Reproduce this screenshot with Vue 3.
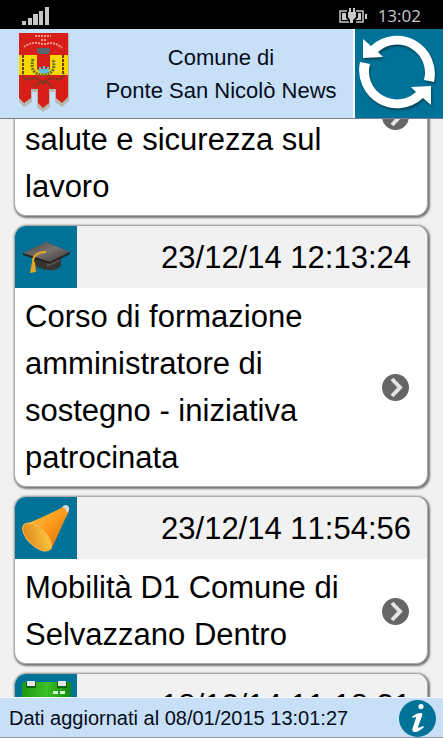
<template>
  <div class="app">
    <div class="status-bar">
      <svg class="signal" viewBox="0 0 28 18" aria-hidden="true">
        <rect x="0" y="14" width="4" height="4" />
        <rect x="6" y="11" width="4" height="7" />
        <rect x="11" y="7" width="5" height="11" />
        <rect x="17" y="4" width="4" height="14" />
        <rect x="23" y="0" width="4" height="18" />
      </svg>
      <svg class="battery" viewBox="0 0 30 18" aria-hidden="true">
        <path class="case" d="M9 4H2V15H11M18 15H25V4H18" />
        <path d="M4 6H8V11L10 13H4ZM23 6H20V11L17 13H23Z" />
        <path d="M10 5H11V1H13V5H15V1H17V5H18V10L15 13V16H12V13L10 10ZM27 7H29V12H27Z" />
      </svg>
      <span class="clock">13:02</span>
    </div>

    <header class="header">
      <svg class="crest" viewBox="0 0 52 80" aria-hidden="true">
        <path class="fringe" d="M1 1H51V69L44 75L37 70V60H32V75L25 80L19 75V60H14V70L6 75L1 70Z" />
        <path fill="#d81e18" d="M1 1H50V65L44 71L38 66V57H31V71L25 76L20 71V57H13V66L6 71L1 66Z" />
        <path fill="#f7d800" d="M1 23H50V43H1Z" />
        <path fill="#d81e18" d="M19 20H32V37Q25 44 19 37Z" />
        <path fill="#58666c" d="M19 16H32V20L30 22H21L19 20Z" />
        <path fill="#58c5df" d="M21 38V35H23V37H25V34H27V37H29V35H31V40Q26 44 21 40Z" />
        <path class="laurel" d="M15 27Q11 42 25 43Q39 42 35 27" />
        <path class="vine" d="M5 23V40Q4 47 10 48M45 23V40Q47 47 39 48M10 47Q19 44 25 52Q32 44 40 47M16 55Q25 44 34 55" />
        <path class="banner" d="M17 4H33M23 8H28M6 15Q12 10 20 11Q26 13 32 11Q39 11 44 16" />
      </svg>
      <h1 class="title">Comune di<br>Ponte San Nicolò News</h1>
      <button class="refresh" type="button" aria-label="Aggiorna">
        <svg viewBox="0 0 88 89" aria-hidden="true">
          <path :d="arrow" />
          <path :d="arrow" transform="rotate(180 42 43)" />
        </svg>
      </button>
    </header>

    <main ref="list" class="list">
      <a v-for="item in news" :key="item.date" class="card" href="#">
        <div class="card-head">
          <div class="card-icon">
            <svg v-if="item.icon === 'cap'" viewBox="0 0 62 62" aria-hidden="true">
              <defs>
                <linearGradient id="board" x1="0" y1="0" x2="1" y2="1">
                  <stop offset="0" stop-color="#444" />
                  <stop offset="0.5" stop-color="#77716e" />
                  <stop offset="1" stop-color="#333" />
                </linearGradient>
              </defs>
              <path fill="#343434" d="M19 30L46 28V40Q42 45 33 44Q24 43 19 39Z" />
              <path fill="#62504c" d="M32 37L45 32V35L32 41Z" />
              <path fill="url(#board)" d="M8 27L31 16L55 26L35 36Z" />
              <path fill="#222" d="M8 27L35 36L55 26V28L35 38L8 29Z" />
              <path class="cord" d="M31 26Q20 26 18 34V39" />
              <path fill="#e4a620" d="M17 36H20L21 46L15 47Z" />
            </svg>
            <svg v-else-if="item.icon === 'horn'" viewBox="0 0 62 62" aria-hidden="true">
              <defs>
                <linearGradient id="horn" x1="0" y1="0" x2="1" y2="1">
                  <stop offset="0" stop-color="#ffd25a" />
                  <stop offset="0.5" stop-color="#ff9c1c" />
                  <stop offset="1" stop-color="#d96500" />
                </linearGradient>
                <linearGradient id="mouth" x1="0" y1="0" x2="1" y2="1">
                  <stop offset="0" stop-color="#d97d12" />
                  <stop offset="1" stop-color="#ffd24b" />
                </linearGradient>
              </defs>
              <path fill="url(#horn)" d="M8 28Q25 22 48 10Q52 7 54 12Q54 15 51 20L36 53Z" />
              <path fill="#d8d9de" d="M47 10Q51 6 54 10Q55 13 52 16Q51 11 47 10Z" />
              <ellipse class="mouth" cx="22" cy="40" rx="9" ry="18" transform="rotate(-46 22 40)" />
            </svg>
            <svg v-else viewBox="0 0 62 62" aria-hidden="true">
              <defs>
                <linearGradient id="page" x1="0" y1="0" x2="1" y2="0">
                  <stop offset="0" stop-color="#1c9a10" />
                  <stop offset="0.5" stop-color="#3cc024" />
                  <stop offset="1" stop-color="#128a10" />
                </linearGradient>
              </defs>
              <rect x="7" y="8" width="49" height="48" rx="2" fill="url(#page)" />
              <path fill="#fff" d="M8 23H55V54H8Z" />
              <path fill="#d8f5d2" d="M38 17H43V20H38ZM45 17H50V20H45Z" />
              <path fill="#0d6414" d="M11 8H21V14H11ZM42 8H52V14H42Z" />
              <path fill="#e6e6e6" d="M12 7H20V12H12ZM43 7H51V12H43Z" />
            </svg>
          </div>
          <time class="date">{{ item.date }}</time>
        </div>
        <div class="card-body">
          <p class="text">{{ item.text }}</p>
          <svg class="chevron" viewBox="0 0 27 27" aria-hidden="true">
            <circle cx="13.5" cy="13.5" r="13.5" />
            <path d="M10 5L18 13.5L10 22" />
          </svg>
        </div>
      </a>
    </main>

    <footer class="footer">
      <span>Dati aggiornati al 08/01/2015 13:01:27</span>
      <button class="info" type="button" aria-label="Informazioni">
        <svg viewBox="0 0 37 37" aria-hidden="true">
          <circle cx="22" cy="6.500" r="2.600" />
          <path d="M13 17Q17 13 22 13Q24 13 23 16L19 27Q19 29 24 26L25 27Q20 32 16 32Q12 32 14 27L17 18Q17 16 14 18Z" />
        </svg>
      </button>
    </footer>
  </div>
</template>

<script setup>
import { ref, onMounted } from 'vue'

const arrow = 'M8 10L16 17A38 38 0 0 1 79 53L69 51A28 28 0 0 0 23 23L28 28L8 29Z'

const news = [
  { icon: 'cap', date: '23/12/14 12:20:10', text: 'Corso di formazione amministratori per la salute e sicurezza sul lavoro' },
  { icon: 'cap', date: '23/12/14 12:13:24', text: 'Corso di formazione amministratore di sostegno - iniziativa patrocinata' },
  { icon: 'horn', date: '23/12/14 11:54:56', text: 'Mobilità D1 Comune di Selvazzano Dentro' },
  { icon: 'calendar', date: '18/12/14 11:18:31', text: 'Eventi di Natale' },
]

const list = ref(null)

// keep the second item just below the end of the first one
onMounted(() => {
  const second = list.value.children[1]
  list.value.scrollTop = second.offsetTop - list.value.offsetTop - 106
})
</script>

<style>
body { margin: 0; background: #f1f1f1; }
</style>

<style scoped>
.app {
  height: 100vh;
  display: flex; flex-direction: column;
  background: #f1f1f1; color: #000;
  font-family: "Liberation Sans", Arial, sans-serif;
  font-kerning: none;
}

.status-bar {
  flex: none; height: 29px; box-sizing: border-box;
  display: flex; align-items: center;
  padding: 2px 22px 0;
  background: #000; color: #c8c8c8;
}
.signal { width: 28px; height: 18px; fill: #c8c8c8; }
.battery { width: 30px; height: 18px; margin-left: auto; fill: #c8c8c8; }
.case { fill: none; stroke: #c8c8c8; stroke-width: 1.5; }
.clock {
  margin-left: 10px;
  font-family: "Open Sans", "Noto Sans", sans-serif;
  font-size: 17px; line-height: 24px;
}

.header {
  flex: none; height: 90px; box-sizing: border-box;
  display: flex; align-items: stretch;
  background: #c7dff7;
  border-bottom: 1px solid #777e88;
}
.crest { flex: none; width: 52px; height: 80px; margin: 3px 0 0 18px; }
.fringe { fill: #b5b9b0; }
.laurel { fill: none; stroke: #68702a; stroke-width: 3; stroke-dasharray: 2 1; }
.vine { fill: none; stroke: #713c20; stroke-width: 2; stroke-dasharray: 3 1; }
.banner { fill: none; stroke: #ef9a84; stroke-width: 2; stroke-dasharray: 2 1; }
.title {
  flex: 1; margin: 0; align-self: center;
  padding-left: 19px;
  font-size: 22px; font-weight: 400; line-height: 33px;
  text-align: center; white-space: nowrap;
  color: #050d20;
}
.refresh {
  flex: none; width: 90px; padding: 0;
  border: 0; border-left: 2px solid #fff;
  background: #007297; cursor: pointer;
}
.refresh svg {
  display: block; width: 88px; height: 89px;
  fill: #fff; filter: drop-shadow(1px 2px 1px rgba(0,0,0,0.4));
}

.list {
  flex: 1; min-height: 0;
  display: flex; flex-direction: column; gap: 9px;
  padding: 10px 15px 10px 14px;
  overflow-y: auto; scrollbar-width: none;
}
.card {
  flex: none; overflow: hidden;
  border: 1px solid #aaa; border-radius: 12px;
  box-shadow: 1px 1px 2px 1px #777;
  background: #fff; color: #000; text-decoration: none;
}
.card-head {
  display: flex; align-items: center;
  background: #f1f1f1;
}
.card-icon { width: 62px; height: 62px; background: #007297; }
.card-icon svg { display: block; width: 62px; height: 62px; }
.cord { fill: none; stroke: #e4a620; stroke-width: 2; }
.mouth { fill: url(#mouth); stroke: #ffb94a; stroke-width: 1; }
.date {
  flex: 1; padding-right: 16px;
  font-size: 31px; line-height: 47px; text-align: right;
}
.card-body {
  display: flex; align-items: center;
  padding: 5px 18px 5px 10px;
}
.text { flex: 1; margin: 0; font-size: 31px; line-height: 47px; }
.chevron { flex: none; width: 27px; height: 27px; margin-left: 10px; fill: #666; }
.chevron path { fill: none; stroke: #e4e4e4; stroke-width: 4; }

.footer {
  flex: none; height: 41px; box-sizing: border-box;
  display: flex; align-items: center; justify-content: space-between;
  padding: 1px 7px 0 9px;
  background: #c7dff7; color: #050d20;
  border-top: 1px solid #f6f9fc;
  border-bottom: 1px solid #8b98a8;
  font-size: 20px;
}
.info {
  width: 37px; height: 37px; padding: 0;
  border: 0; border-radius: 50%;
  background: #007297; cursor: pointer;
}
.info svg { display: block; width: 37px; height: 37px; fill: #fff; }
</style>
